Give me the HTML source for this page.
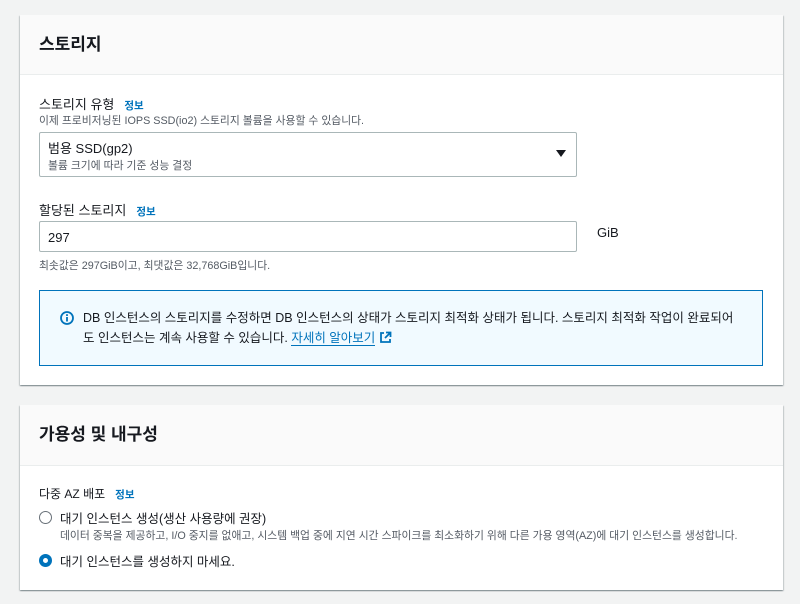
<!DOCTYPE html>
<html><head><meta charset="utf-8"><style>
*{margin:0;padding:0;box-sizing:border-box}
body{width:800px;height:604px;background:#f2f3f3;font-family:"Liberation Sans","Noto Sans CJK KR",sans-serif;color:#16191f;position:relative;overflow:hidden}
.panel{position:absolute;left:20px;width:763px;background:#fff;box-shadow:0 1px 1px rgba(0,28,36,.3),1px 1px 1px rgba(0,28,36,.15),-1px 1px 1px rgba(0,28,36,.15)}
.hdr{background:#fafafa;border-bottom:1px solid #eaeded;padding-left:19px;font-size:17px;font-weight:700;}
.abs{position:absolute}
.lbl{font-size:13px}
.info{color:#0073bb;font-weight:700;font-size:10.5px;margin-left:10px}
.desc{font-size:10.8px;color:#545b64;white-space:nowrap}
.box{position:absolute;border:1px solid #aab7b8;border-radius:2px;background:#fff}
</style></head><body>
<div class="panel" style="top:15px;height:370px">
 <div class="hdr" style="height:60px;line-height:60px">스토리지</div>
 <div class="abs lbl" style="left:19px;top:79px">스토리지 유형<span class="info">정보</span></div>
 <div class="abs desc" style="left:19px;top:97px">이제 프로비저닝된 IOPS SSD(io2) 스토리지 볼륨을 사용할 수 있습니다.</div>
 <div class="box" style="left:19px;top:117px;width:538px;height:45px">
  <div class="abs" style="left:8px;top:5px;font-size:13px">범용 SSD(gp2)</div>
  <div class="abs desc" style="left:8px;top:24px">볼륨 크기에 따라 기준 성능 결정</div>
  <div class="abs" style="right:10px;top:17px;width:0;height:0;border-left:5px solid transparent;border-right:5px solid transparent;border-top:7px solid #16191f"></div>
 </div>
 <div class="abs lbl" style="left:19px;top:185px">할당된 스토리지<span class="info">정보</span></div>
 <div class="box" style="left:19px;top:206px;width:538px;height:31px"><div class="abs" style="left:8px;top:8px;font-size:13px">297</div></div>
 <div class="abs lbl" style="left:577px;top:210px">GiB</div>
 <div class="abs desc" style="left:19px;top:242px">최솟값은 297GiB이고, 최댓값은 32,768GiB입니다.</div>
 <div class="abs" style="left:19px;top:275px;width:724px;height:76px;background:#f1faff;border:1px solid #0073bb">
  <svg class="abs" style="left:20px;top:20px" width="14" height="14" viewBox="0 0 14 14"><circle cx="7" cy="7" r="6" fill="none" stroke="#0073bb" stroke-width="1.8"/><rect x="6.1" y="6" width="1.8" height="4.5" fill="#0073bb"/><rect x="6.1" y="3.2" width="1.8" height="1.8" fill="#0073bb"/></svg>
  <div class="abs" style="left:43px;top:17px;font-size:12.5px;line-height:20px;width:680px">DB 인스턴스의 스토리지를 수정하면 DB 인스턴스의 상태가 스토리지 최적화 상태가 됩니다. 스토리지 최적화 작업이 완료되어<br>도 인스턴스는 계속 사용할 수 있습니다. <span style="color:#0073bb;border-bottom:1px solid #0073bb">자세히 알아보기</span> <svg width="13" height="13" viewBox="0 0 13 13" style="vertical-align:-2px"><path d="M5 2H2v9h9V8" fill="none" stroke="#0073bb" stroke-width="1.8"/><path d="M7 1.5h4.5V6M11.5 1.5L6 7" fill="none" stroke="#0073bb" stroke-width="1.8"/></svg></div>
 </div>
</div>
<div class="panel" style="top:405px;height:185px">
 <div class="hdr" style="height:61px;line-height:60px">가용성 및 내구성</div>
 <div class="abs lbl" style="left:19px;top:80px;font-size:12px">다중 AZ 배포<span class="info">정보</span></div>
 <div class="abs" style="left:19px;top:106px;width:13px;height:13px;border:1.5px solid #687078;border-radius:50%"></div>
 <div class="abs" style="left:40px;top:103px;font-size:12.5px">대기 인스턴스 생성(생산 사용량에 권장)</div>
 <div class="abs desc" style="left:40px;top:122px">데이터 중복을 제공하고, I/O 중지를 없애고, 시스템 백업 중에 지연 시간 스파이크를 최소화하기 위해 다른 가용 영역(AZ)에 대기 인스턴스를 생성합니다.</div>
 <div class="abs" style="left:19px;top:149px;width:13px;height:13px;border:4px solid #0073bb;border-radius:50%"></div>
 <div class="abs" style="left:40px;top:146px;font-size:12.5px">대기 인스턴스를 생성하지 마세요.</div>
</div>
</body></html>
